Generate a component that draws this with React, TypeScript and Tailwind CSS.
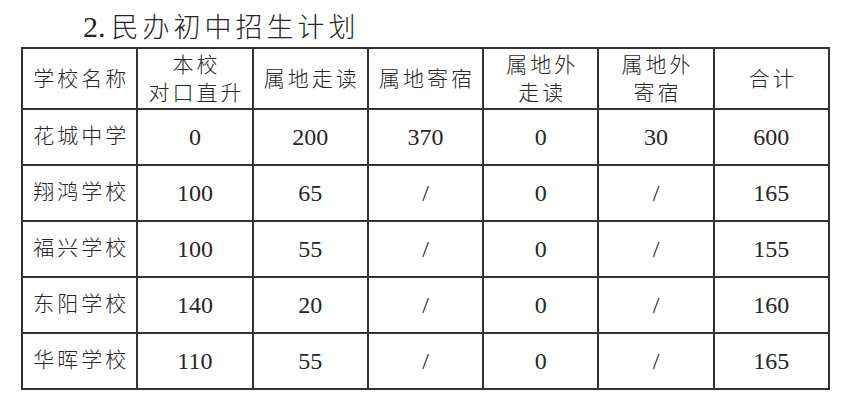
interface Row {
  name: string;
  values: string[];
}

const rows: Row[] = [
  { name: '花城中学', values: ['0', '200', '370', '0', '30', '600'] },
  { name: '翔鸿学校', values: ['100', '65', '/', '0', '/', '165'] },
  { name: '福兴学校', values: ['100', '55', '/', '0', '/', '155'] },
  { name: '东阳学校', values: ['140', '20', '/', '0', '/', '160'] },
  { name: '华晖学校', values: ['110', '55', '/', '0', '/', '165'] },
]

const headers: string[][] = [
  ['学校名称'],
  ['本校', '对口直升'],
  ['属地走读'],
  ['属地寄宿'],
  ['属地外', '走读'],
  ['属地外', '寄宿'],
  ['合计'],
]

export default function App() {
  return (
    <div className="w-[849px] h-[410px] bg-white text-[#262626] font-[Liberation_Serif,Noto_Sans_CJK_SC,serif] overflow-hidden">
      {/* 标题 */}
      <div className="h-[47px] pt-[9px] pl-[83px] text-[27px] leading-[36px] tracking-[4px] font-light">
        <span className="font-[Liberation_Serif,serif] text-[30px] tracking-normal pr-[6px]">2.</span>
        民办初中招生计划
      </div>

      <table className="ml-[21px] w-[809px] table-fixed border-collapse">
        <thead>
          <tr className="h-[61px]">
            {headers.map((lines, i) => (
              <th
                key={i}
                className="border-2 border-[#333] p-0 text-center align-middle font-light text-[21px] leading-[28px] tracking-[3px] pl-[3px]"
              >
                {lines.map((l) => (
                  <div key={l}>{l}</div>
                ))}
              </th>
            ))}
          </tr>
        </thead>
        <tbody>
          {rows.map((row) => (
            <tr key={row.name} className="h-[56px]">
              <td className="border-2 border-[#333] p-0 text-center align-middle font-light text-[21px] tracking-[3px] pl-[3px]">
                {row.name}
              </td>
              {row.values.map((v, i) => (
                <td
                  key={i}
                  className="border-2 border-[#333] p-0 text-center align-middle font-[Liberation_Serif,serif] text-[24px]"
                >
                  {v}
                </td>
              ))}
            </tr>
          ))}
        </tbody>
      </table>
    </div>
  )
}
